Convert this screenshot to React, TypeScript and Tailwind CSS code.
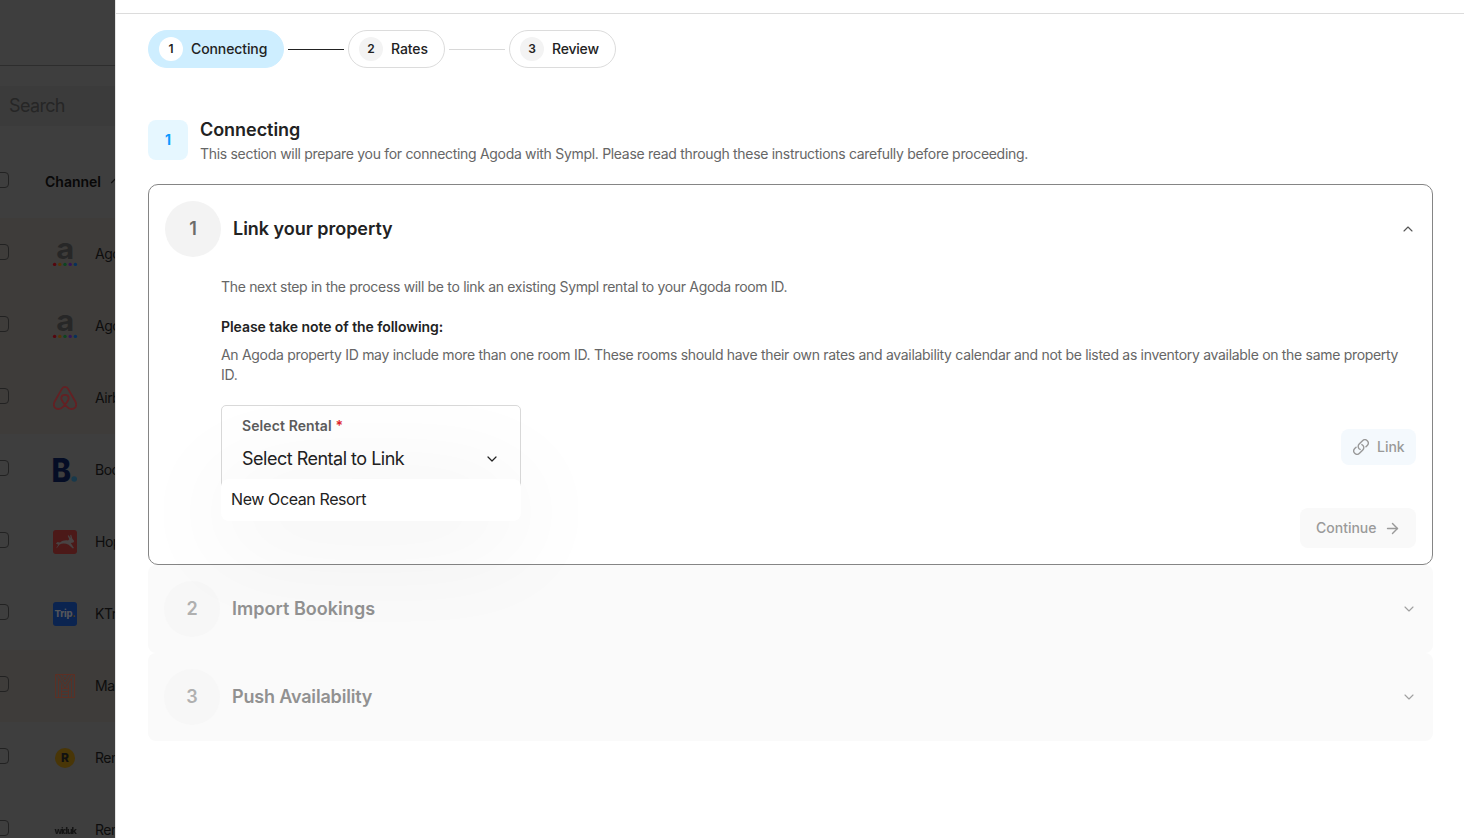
import type { ReactNode } from 'react'
import { ArrowRight, ChevronDown, ChevronUp } from 'lucide-react'

function AgodaLogo() {
  return (
    <svg width="24" height="26" viewBox="0 0 24 26" className="overflow-visible">
      <text x="3.300" y="18" fontSize="29" fontWeight="700" fill="#272727" fontFamily="Inter, sans-serif" textLength="18" lengthAdjust="spacingAndGlyphs">a</text>
      <circle cx="1.6" cy="23.4" r="1.7" fill="#56060e" />
      <circle cx="6.8" cy="23.4" r="1.7" fill="#543407" />
      <circle cx="12" cy="23.4" r="1.7" fill="#0d4520" />
      <circle cx="17.2" cy="23.4" r="1.7" fill="#341456" />
      <circle cx="22.4" cy="23.4" r="1.7" fill="#06305c" />
    </svg>
  )
}

function AirbnbLogo() {
  return (
    <svg width="24" height="24" viewBox="0 0 24 24" fill="none" stroke="#642023" strokeWidth="1.800">
      <path d="M12 18.7c-2.3-2.7-3.7-4.700-3.700-6.400 0-2 1.500-3.400 3.700-3.400s3.700 1.400 3.700 3.400c0 1.700-1.400 3.700-3.700 6.400-2 2.500-4.100 4.300-6.700 4.300-2.700 0-4.500-2-4.500-4.400 0-1.100.4-2.100 1-3.400L8.600 3.400C9.500 1.600 10.400.9 12 .9s2.500.7 3.400 2.500l6.800 11.800c.6 1.300 1 2.300 1 3.400 0 2.400-1.800 4.400-4.500 4.400-2.600 0-4.700-1.800-6.700-4.300Z" />
    </svg>
  )
}

function BookingLogo() {
  return (
    <svg width="24" height="24" viewBox="0 0 24 24" className="overflow-visible">
      <text x="-1.500" y="23.500" fontSize="32" fontWeight="800" fill="#050d25" fontFamily="Inter, sans-serif" textLength="19.500" lengthAdjust="spacingAndGlyphs">B</text>
      <circle cx="21.200" cy="21" r="2.800" fill="#18394b" />
    </svg>
  )
}

function HopperLogo() {
  return (
    <svg width="24" height="24" viewBox="0 0 24 24">
      <rect width="24" height="24" rx="3" fill="#4c1918" />
      <path d="M3.200 18.300 5.300 14.800 2.800 13.400l1.800-1.500 2.400.5c2-1.800 4.800-2.400 8-2l1.200-1.200-1.500-3.500 1-.5 1.800 2.700-.3-3 1-.1 1.200 4 1.800 2.200-.8 1.500-2.600.5 3.200 5-1.200.4-4.200-3.600c-3.200-1.700-6.200-1.800-9-.3l-2.500 3.200Z" fill="#494343" />
    </svg>
  )
}

function TripLogo() {
  return (
    <div className="flex h-6 w-6 items-center justify-center rounded-[3px] bg-[#0b2450] text-[9.500px] font-extrabold leading-none tracking-[-0.2px] text-[#54555a]">
      Trip<span className="text-[#4c3c14]">.</span>
    </div>
  )
}

function MarriottLogo() {
  return (
    <svg width="20" height="24" viewBox="0 0 20 24" fill="none" stroke="#5c3025" strokeWidth="1">
      <path d="M.5.5h19v23H.5zM3.500 5v18.500M16.500 5v18.500M6.500 10.500v13M13.500 10.500v13" />
      <path d="M1 .5 10 14 19 .5M4 .5l6 9.500 6-9.500M7 .5l3 5 3-5M6.500 14.500h7M6.500 17.500h7M6.500 20.500h7" strokeWidth="0.900" />
    </svg>
  )
}

function RLogo() {
  return (
    <div className="flex h-5 w-5 items-center justify-center rounded-full bg-[#493607] text-[12px] font-extrabold text-[#111]">R</div>
  )
}

function WidukLogo() {
  return (
    <div className="flex h-6 w-5 items-center justify-center text-[9px] font-extrabold leading-none tracking-[-1.2px] text-[#151515] blur-[0.7px]">widuk</div>
  )
}

const CHANNELS: { name: string; logo: ReactNode; tinted?: boolean }[] = [
  { name: 'Agoda', logo: <AgodaLogo />, tinted: true },
  { name: 'Agoda', logo: <AgodaLogo />, tinted: true },
  { name: 'Airbnb', logo: <AirbnbLogo />, tinted: true },
  { name: 'Booking', logo: <BookingLogo /> },
  { name: 'Hopper', logo: <HopperLogo /> },
  { name: 'KTrip', logo: <TripLogo /> },
  { name: 'Marriott', logo: <MarriottLogo />, tinted: true },
  { name: 'Rentals', logo: <RLogo /> },
  { name: 'Rentals', logo: <WidukLogo /> },
]

function Checkbox() {
  return <span className="-ml-[7px] h-4 w-4 shrink-0 rounded-[4px] border border-[#222]" />
}

function ChannelList() {
  return (
    <aside className="h-full w-[115px] shrink-0 overflow-hidden bg-[#3e3e3e]">
      <div className="h-[66px] border-b border-[#2d2d2d]" />
      <div className="mt-5 flex h-10 items-center bg-[#3b3b3b] pb-0.5 pl-[9px] text-[18px] tracking-[-0.65px] text-[#262626]">Search</div>
      <div className="flex h-[92px] w-[200px] items-center pt-[18px]">
        <span className="mb-[2px] flex"><Checkbox /></span>
        <span className="ml-9 text-[14px] font-semibold text-[#080808]">Channel</span>
        <ChevronUp size={14} className="ml-[7px] shrink-0 text-[#111]" />
      </div>
      {CHANNELS.map((c, i) => (
        <div key={i} className={`flex h-[72px] w-[200px] items-center ${c.tinted ? 'bg-[#3e3c3a]' : ''}`}>
          <span className="mb-1 flex"><Checkbox /></span>
          <span className="ml-11 flex w-6 justify-center">{c.logo}</span>
          <span className="mb-[2px] ml-[18px] text-[14px] tracking-[-0.5px] text-[#0d0d0d]">{c.name}</span>
        </div>
      ))}
    </aside>
  )
}

function Step({ n, label, active, className }: { n: number; label: string; active?: boolean; className: string }) {
  return (
    <div className={`flex h-[38px] items-center rounded-full border pl-[10px] ${active ? 'border-[#ceeeff] bg-[#ceeeff]' : 'border-[#dcdcdc]'} ${className}`}>
      <span className={`flex h-6 w-6 items-center justify-center rounded-full text-[12px] font-semibold ${active ? 'bg-white' : 'bg-[#f3f3f3]'}`}>{n}</span>
      <span className="mb-[2px] ml-2 text-[14px] font-medium">{label}</span>
    </div>
  )
}

function LockedPanel({ n, title, className }: { n: number; title: string; className: string }) {
  return (
    <div className="flex h-[88px] items-center rounded-lg bg-[#fafafa] px-4">
      <span className="flex h-14 w-14 items-center justify-center rounded-full bg-[#f7f7f7] pb-px text-[18px] font-semibold text-[#b0b0b0]">{n}</span>
      <h3 className={`mb-[2px] ml-3 text-[18px] font-semibold text-[#919191] ${className}`}>{title}</h3>
      <ChevronDown size={16} strokeWidth={1.700} className="ml-auto text-[#a0a0a0]" />
    </div>
  )
}

export default function App() {
  return (
    <div className="flex h-screen overflow-hidden bg-white font-['Inter',sans-serif] text-[#222]">
      <ChannelList />
      <main className="min-w-0 flex-1 border-l border-[#e4e4e4]">
        <div className="h-[14px] border-b border-[#dcdcdc]" />
        <div className="pl-8 pr-[31px] pt-4">
          <div className="flex items-center gap-1">
            <Step n={1} label="Connecting" active className="w-[136px] tracking-[-0.1px]" />
            <div className="h-px w-14 bg-[#222]" />
            <Step n={2} label="Rates" className="w-[97px] tracking-[-0.1px]" />
            <div className="h-px w-14 bg-[#d8d8d8]" />
            <Step n={3} label="Review" className="w-[107px] tracking-[-0.2px]" />
          </div>

          <div className="mt-[52px] flex h-10 gap-3">
            <span className="flex h-10 w-10 items-center justify-center rounded-lg bg-[#e6f7ff] pb-px text-[14px] font-bold text-[#0c9bff]">1</span>
            <div>
              <h2 className="text-[18px] font-semibold leading-5 tracking-[-0.05px]">Connecting</h2>
              <p className="mt-1 whitespace-nowrap text-[14px] leading-5 tracking-[-0.305px] text-[#666]">
                This section will prepare you for connecting Agoda with Sympl. Please read through these instructions carefully before proceeding.
              </p>
            </div>
          </div>

          <section className="mt-6 h-[381px] rounded-[10px] border border-[#858585] px-4 pt-4">
            <div className="flex h-14 items-center">
              <span className="flex h-14 w-14 items-center justify-center rounded-full bg-[#f3f3f3] pb-px text-[18px] font-semibold text-[#6b6b6b]">1</span>
              <h3 className="mb-[2px] ml-3 text-[18px] font-semibold tracking-[-0.03px]">Link your property</h3>
              <ChevronUp size={16} strokeWidth={1.700} className="ml-auto text-[#555]" />
            </div>
            <div className="pl-14">
              <p className="mt-5 text-[14px] leading-5 tracking-[-0.32px] text-[#666]">
                The next step in the process will be to link an existing Sympl rental to your Agoda room ID.
              </p>
              <p className="mt-5 text-[14px] font-semibold leading-5 tracking-[-0.06px]">Please take note of the following:</p>
              <p className="mt-2 whitespace-nowrap text-[14px] leading-5 tracking-[-0.305px] text-[#666]">
                An Agoda property ID may include more than one room ID. These rooms should have their own rates and availability calendar and not be listed as inventory available on the same property
                <br />
                ID.
              </p>
              <div className="mt-5 flex h-[84px] items-center justify-between">
                <div className="relative h-[84px] w-[300px] rounded-[5px] border border-[#d9d9d9] px-5 pt-[10px]">
                  <p className="text-[14px] font-semibold leading-5 tracking-[0.1px] text-[#5c5c5c]">
                    Select Rental <span className="text-[#e0242b]">*</span>
                  </p>
                  <div className="mt-[11px] flex items-center justify-between">
                    <span className="text-[18px] leading-6 tracking-[-0.5px]">Select Rental to Link</span>
                    <ChevronDown size={16} strokeWidth={1.800} className="text-[#222]" />
                  </div>
                  {/* open option list, drops over the field's lower edge */}
                  <div className="absolute -left-px top-[73px] flex h-[42px] w-[300px] items-center rounded-lg bg-white pb-0.5 pl-[10px] text-[16px] tracking-[-0.4px] shadow-[0_12px_110px_rgba(0,0,0,0.09)]">
                    New Ocean Resort
                  </div>
                </div>
                <button className="flex h-9 w-[75px] items-center rounded-lg bg-[#f4f9fd] pl-3 text-[14px] font-medium text-[#999]">
                  <svg width="16" height="16" viewBox="1.200 1.200 21.600 21.600" fill="none" stroke="currentColor" strokeWidth="1.900" strokeLinecap="round" strokeLinejoin="round">
                    <path d="M13.190 8.688a4.500 4.500 0 0 1 1.242 7.244l-4.500 4.500a4.500 4.500 0 0 1-6.364-6.364l1.757-1.757m13.350-.622 1.757-1.757a4.500 4.500 0 0 0-6.364-6.364l-4.500 4.500a4.500 4.500 0 0 0 1.242 7.244" />
                  </svg>
                  <span className="mb-[2px] ml-2">Link</span>
                </button>
              </div>
              <div className="mt-[19px] flex justify-end">
                <button className="flex h-10 w-[116px] items-center rounded-lg bg-[#f9f9f9] pl-4 text-[14px] font-medium text-[#9a9a9a]">
                  <span className="mb-[2px]">Continue</span>
                  <ArrowRight size={17} strokeWidth={2} className="ml-[7px]" />
                </button>
              </div>
            </div>
          </section>

          <LockedPanel n={2} title="Import Bookings" className="tracking-[0.03px]" />
          <LockedPanel n={3} title="Push Availability" className="tracking-[-0.17px]" />
        </div>
      </main>
    </div>
  )
}
